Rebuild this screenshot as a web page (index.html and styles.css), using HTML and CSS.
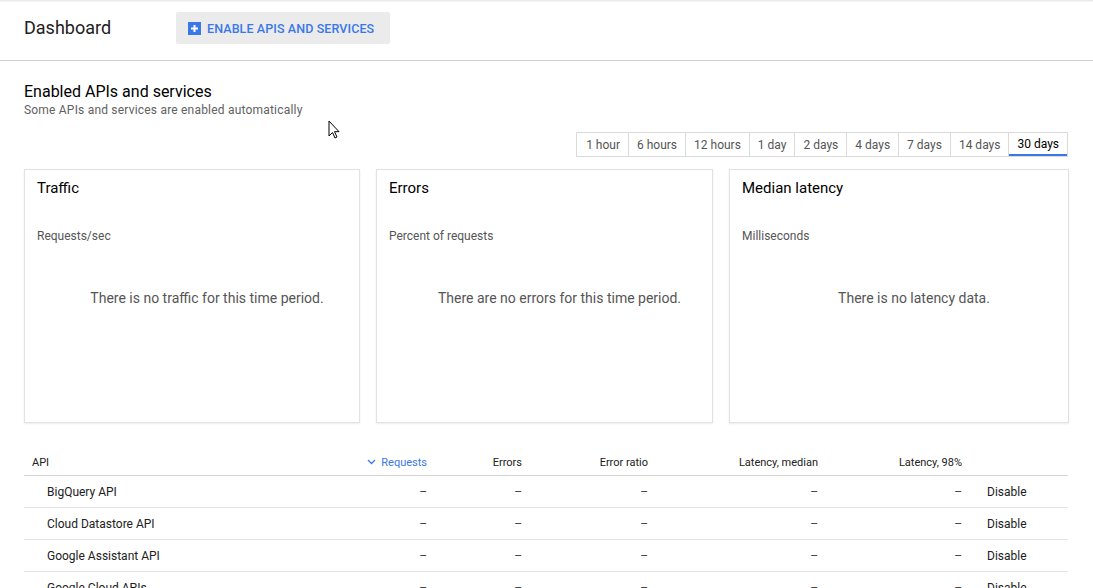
FILE: index.html
```html
<!DOCTYPE html>
<html>
<head>
<meta charset="utf-8">
<link rel="stylesheet" href="styles.css">
</head>
<body>
<div class="topshade"></div>
<header class="header">
  <h1 class="title">Dashboard</h1>
  <button class="enable-btn">
    <svg class="plus" width="13" height="13" viewBox="0 0 13 13"><rect width="13" height="13" fill="#3b78e7"/><path d="M6.5 3v7M3 6.5h7" stroke="#fff" stroke-width="2"/></svg>
    ENABLE APIS AND SERVICES
  </button>
</header>
<main class="main">
  <section class="intro">
    <h2 class="section-title">Enabled APIs and services</h2>
    <p class="section-sub">Some APIs and services are enabled automatically</p>
  </section>
  <div class="range-row">
    <div class="range">
      <span class="r">1 hour</span><span class="r">6 hours</span><span class="r">12 hours</span><span class="r">1 day</span><span class="r">2 days</span><span class="r">4 days</span><span class="r">7 days</span><span class="r">14 days</span><span class="r active">30 days</span>
    </div>
  </div>
  <div class="cards">
    <div class="card">
      <div class="card-title">Traffic</div>
      <div class="card-sub">Requests/sec</div>
      <div class="card-msg">There is no traffic for this time period.</div>
    </div>
    <div class="card">
      <div class="card-title">Errors</div>
      <div class="card-sub">Percent of requests</div>
      <div class="card-msg">There are no errors for this time period.</div>
    </div>
    <div class="card">
      <div class="card-title">Median latency</div>
      <div class="card-sub">Milliseconds</div>
      <div class="card-msg">There is no latency data.</div>
    </div>
  </div>
  <div class="table">
    <div class="row head">
      <div class="c name">API</div>
      <div class="c num sorted"><svg class="chev" width="9" height="6" viewBox="0 0 9 6"><path d="M1 1l3.5 3.5L8 1" fill="none" stroke="#3b78e7" stroke-width="1.3"/></svg>Requests</div>
      <div class="c num">Errors</div>
      <div class="c num">Error ratio</div>
      <div class="c num">Latency, median</div>
      <div class="c num">Latency, 98%</div>
      <div class="c act"></div>
    </div>
    <div class="row">
      <div class="c name">BigQuery API</div>
      <div class="c num">–</div><div class="c num">–</div><div class="c num">–</div><div class="c num">–</div><div class="c num">–</div>
      <div class="c act">Disable</div>
    </div>
    <div class="row">
      <div class="c name">Cloud Datastore API</div>
      <div class="c num">–</div><div class="c num">–</div><div class="c num">–</div><div class="c num">–</div><div class="c num">–</div>
      <div class="c act">Disable</div>
    </div>
    <div class="row">
      <div class="c name">Google Assistant API</div>
      <div class="c num">–</div><div class="c num">–</div><div class="c num">–</div><div class="c num">–</div><div class="c num">–</div>
      <div class="c act">Disable</div>
    </div>
    <div class="row">
      <div class="c name">Google Cloud APIs</div>
      <div class="c num">–</div><div class="c num">–</div><div class="c num">–</div><div class="c num">–</div><div class="c num">–</div>
      <div class="c act">Disable</div>
    </div>
  </div>
</main>
<svg class="cursor" width="14" height="20" viewBox="0 0 14 20"><path d="M1 1v15l3.5-3.5 2.5 5.5 2-1-2.5-5.3H11z" fill="#fff" stroke="#000" stroke-width="1" stroke-linejoin="round"/></svg>
</body>
</html>
```
FILE: styles.css
```css
html, body {
  margin: 0;
  padding: 0;
  background: #fff;
  font-family: Roboto, "Liberation Sans", Arial, sans-serif;
  color: #212121;
  overflow: hidden;
}
.topshade {
  height: 2px;
  background: linear-gradient(#e4e4e4, #fafafa);
}
.header {
  height: 59px;
  display: flex;
  align-items: flex-start;
  padding-left: 24px;
  border-bottom: 1px solid #d2d2d2;
  box-sizing: border-box;
}
.title {
  margin: 15px 0 0 0;
  font-size: 18px;
  font-weight: 400;
  line-height: 22px;
  color: #212121;
  width: 152px;
}
.enable-btn {
  margin-top: 10px;
  height: 32px;
  width: 214px;
  border: none;
  border-radius: 2px;
  background: #ebebeb;
  color: #3b78e7;
  font-family: Roboto, "Liberation Sans", Arial, sans-serif;
  font-size: 12.5px;
  font-weight: 500;
  display: flex;
  align-items: center;
  gap: 6px;
  padding: 0 0 0 12px;
  letter-spacing: 0.1px;
}
.plus { display: block; flex: none; }
.main {
  padding: 0 24px 0 24px;
}
.intro {
  padding-top: 21px;
}
.section-title {
  margin: 0;
  font-size: 16px;
  font-weight: 400;
  line-height: 20px;
  color: #000;
}
.section-sub {
  margin: 0;
  font-size: 12px;
  line-height: 16px;
  color: #616161;
  letter-spacing: 0.2px;
}
.range-row {
  display: flex;
  justify-content: flex-end;
  margin-top: 14px;
}
.range {
  display: flex;
  border: 1px solid #dadada;
  height: 25px;
  box-sizing: border-box;
  margin-right: 1px;
}
.r {
  font-size: 12px;
  color: #555;
  padding: 1px 8px 0 8px;
  line-height: 22px;
  border-right: 1px solid #dadada;
}
.r:first-child { padding-left: 9px; }
.r:last-child { border-right: none; }
.r.active {
  color: #000;
  border-bottom: 2px solid #3b78e7;
  line-height: 21px;
  height: 23px;
  box-sizing: border-box;
}
.cards {
  display: grid;
  grid-template-columns: 336px 337px 340px;
  column-gap: 16px;
  margin-top: 12px;
}
.card {
  height: 254px;
  box-sizing: border-box;
  border: 1px solid #e2e2e2;
  box-shadow: 0 1px 2px rgba(0,0,0,0.08);
  padding: 9px 12px 0 12px;
  display: flex;
  flex-direction: column;
}
.card-title {
  font-size: 15px;
  line-height: 18px;
  color: #000;
}
.card-sub {
  margin-top: 32px;
  font-size: 12px;
  line-height: 15px;
  color: #555;
}
.card-msg {
  margin-top: 45px;
  padding-left: 30px;
  text-align: center;
  font-size: 14px;
  line-height: 18px;
  color: #555;
}
.table {
  margin-top: 26px;
  width: 1044px;
}
.row {
  display: grid;
  grid-template-columns: 306px 97px 95px 126px 170px 144px 106px;
  height: 32px;
  box-sizing: border-box;
  border-bottom: 1px solid #e4e4e4;
  align-items: center;
  font-size: 12px;
  color: #212121;
}
.row.head {
  height: 27px;
  font-size: 11px;
  border-bottom: 1px solid #d4d4d4;
}
.c { white-space: nowrap; }
.name { padding-left: 23px; }
.head .name { padding-left: 8px; }
.num { text-align: right; color: #444; }
.head .num { color: #212121; }
.sorted { color: #3b78e7 !important; display: flex; justify-content: flex-end; align-items: center; gap: 5px; }
.chev { display: block; }
.act { padding-left: 25px; }
.cursor {
  position: absolute;
  left: 328px;
  top: 120px;
}
```
